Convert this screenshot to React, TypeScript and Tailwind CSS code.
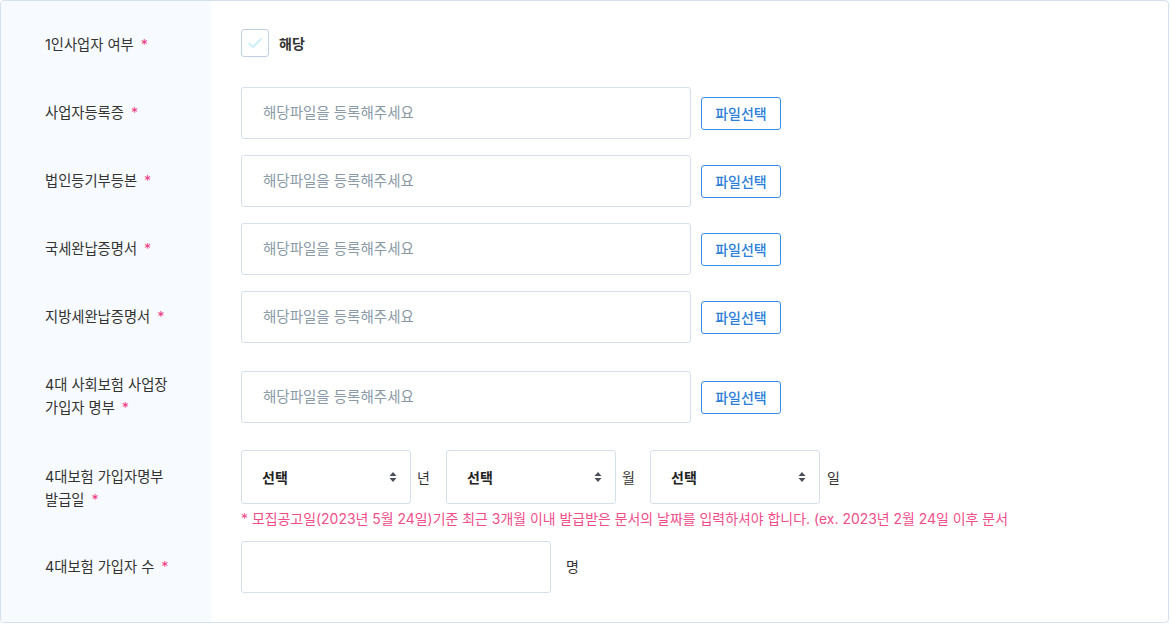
const font = { fontFamily: 'Inter, "Noto Sans CJK KR", sans-serif' }

function Label({ lines, pad }: { lines: string[]; pad: string }) {
  return (
    <div className={`w-[210px] shrink-0 bg-[#f7fbff] pl-[44px] flex items-center text-[14.3px] leading-[23px] text-[#333] ${pad}`}>
      <div>
        {lines.map((l, i) => (
          <div key={i}>
            {l}
            {i === lines.length - 1 && <span className="ml-[7px] text-[#ef3e86]">*</span>}
          </div>
        ))}
      </div>
    </div>
  )
}

function FileInput() {
  return (
    <div className="flex items-center">
      <div className="w-[450px] h-[52px] border border-[#d5e0ec] rounded-[3px] bg-white flex items-center pl-[21px] text-[14.5px] text-[#8a9aa6]">
        해당파일을 등록해주세요
      </div>
      <button className="ml-[10px] w-[80px] h-[33px] border border-[#3a8ee6] rounded-[3px] bg-white text-[14px] font-medium text-[#2d7fd8]">
        파일선택
      </button>
    </div>
  )
}

function Select() {
  return (
    <div className="w-[170px] h-[54px] border border-[#d5e0ea] rounded-[3px] bg-white flex items-center justify-between pl-[20px] pr-[13px]">
      <span className="text-[14px] font-bold text-[#222]">선택</span>
      <svg width="8" height="12" viewBox="0 0 8 12">
        <path d="M4 1 L7.5 5 H0.5 Z" fill="#4a4f5a" />
        <path d="M4 11 L7.5 7 H0.5 Z" fill="#4a4f5a" />
      </svg>
    </div>
  )
}

function Row({
  lines,
  children,
  pad,
  labelPad = 'pb-[2px]',
}: {
  lines: string[]
  children: React.ReactNode
  pad: string
  labelPad?: string
}) {
  return (
    <div className="flex">
      <Label lines={lines} pad={labelPad} />
      <div className={`pl-[30px] flex-1 ${pad}`}>{children}</div>
    </div>
  )
}

export default function App() {
  return (
    <div className="bg-white w-[1171px] h-[625px]" style={font}>
      <div className="w-[1169px] h-[623px] border border-[#d6e1ef] rounded-[4px] overflow-hidden flex flex-col">
        <Row lines={['1인사업자 여부']} pad="pt-[18px] pb-[8px]" labelPad="pt-[18px] pb-[9px]">
          <div className="h-[52px] flex items-center">
            <div className="w-[28px] h-[28px] border border-[#bfd0e2] rounded-[3px] bg-white flex items-center justify-center -mt-[4px]">
              <svg width="16" height="12" viewBox="0 0 16 12">
                <path d="M1.5 6 L6 10 L14.5 1.5" fill="none" stroke="#c2ecfb" strokeWidth="1.6" />
              </svg>
            </div>
            <span className="ml-[10px] text-[14px] font-bold text-[#333] -mt-[4px]">해당</span>
          </div>
        </Row>
        <Row lines={['사업자등록증']} pad="py-[8px]">
          <FileInput />
        </Row>
        <Row lines={['법인등기부등본']} pad="py-[8px]">
          <FileInput />
        </Row>
        <Row lines={['국세완납증명서']} pad="py-[8px]">
          <FileInput />
        </Row>
        <Row lines={['지방세완납증명서']} pad="py-[8px]">
          <FileInput />
        </Row>
        <Row lines={['4대 사회보험 사업장', '가입자 명부']} pad="pt-[20px] pb-[19px]" labelPad="pb-[1px]">
          <FileInput />
        </Row>
        <Row lines={['4대보험 가입자명부', '발급일']} pad="pt-[8px] pb-[5px]" labelPad="">
          <div className="flex items-center text-[14px] text-[#333]">
            <Select />
            <span className="ml-[6px] w-[29px]">년</span>
            <Select />
            <span className="ml-[6px] w-[28px]">월</span>
            <Select />
            <span className="ml-[7px]">일</span>
          </div>
          <div className="mt-[5px] text-[13.95px] leading-[19px] text-[#ef4c8a] whitespace-nowrap">
            * 모집공고일(2023년 5월 24일)기준 최근 3개월 이내 발급받은 문서의 날짜를 입력하셔야 합니다. (ex. 2023년 2월 24일 이후 문서
          </div>
        </Row>
        <div className="flex flex-1">
          <div className="w-[210px] shrink-0 bg-[#f7fbff] flex flex-col">
            <div className="h-[67px] pl-[44px] flex items-center text-[14.3px] text-[#333]">
              4대보험 가입자 수<span className="ml-[7px] text-[#ef3e86]">*</span>
            </div>
          </div>
          <div className="pl-[30px] pt-[8px] flex items-start">
            <div className="w-[310px] h-[52px] border border-[#d5e0ec] rounded-[3px] bg-white" />
            <span className="ml-[15px] mt-[15px] text-[14px] text-[#333]">명</span>
          </div>
        </div>
      </div>
    </div>
  )
}
